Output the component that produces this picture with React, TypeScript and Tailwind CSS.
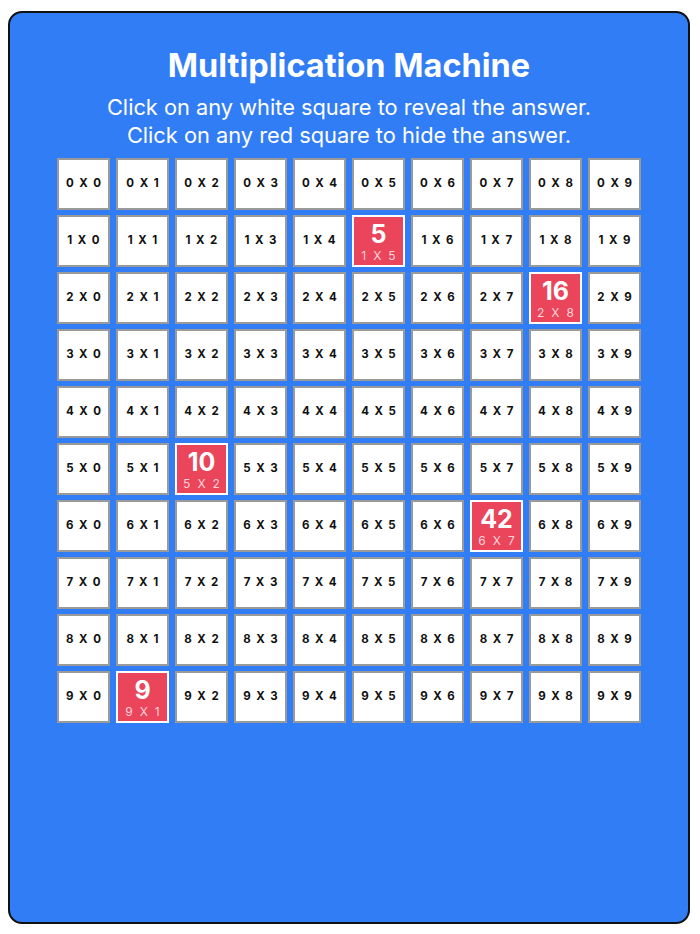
import { useState } from 'react';

const digits = [0, 1, 2, 3, 4, 5, 6, 7, 8, 9];

const initialRevealed = ['1-5', '2-8', '5-2', '6-7', '9-1'];

export default function App() {
  const [revealed, setRevealed] = useState<string[]>(initialRevealed);

  const toggle = (key: string) =>
    setRevealed((prev) =>
      prev.includes(key) ? prev.filter((k) => k !== key) : [...prev, key],
    );

  return (
    <div className="w-[700px] h-[934px] bg-white pt-[11px] pl-[8px] font-['Inter','Liberation_Sans',sans-serif]">
      <div className="w-[682px] h-[913px] bg-[#317df5] border-2 border-[#111] rounded-[14px] flex flex-col items-center pt-[34px]">
        <h1 className="text-white text-[32.5px] font-bold leading-[38px]">
          Multiplication Machine
        </h1>
        <div className="mt-[8px] text-white text-[21.8px] leading-[28px] text-center">
          <p>Click on any white square to reveal the answer.</p>
          <p>Click on any red square to hide the answer.</p>
        </div>
        <div className="mt-[9px] grid grid-cols-10 gap-x-[6px] gap-y-[5px]">
          {digits.map((a) =>
            digits.map((b) => {
              const key = `${a}-${b}`;
              const isOn = revealed.includes(key);
              return isOn
                ? <button
                  key={key}
                  onClick={() => toggle(key)}
                  className="w-[53px] h-[52px] bg-[#ea455b] border-2 border-white flex flex-col items-center justify-center text-white"
                >
                  <span className="text-[25px] font-bold leading-[25px] mt-[1px]">{a * b}</span>
                  <span className="text-[12px] leading-[12px] tracking-[1.8px] pl-[1.8px] text-[#ffd3da] mt-[3px]">
                    {a} X {b}
                  </span>
                </button>
                : <button
                  key={key}
                  onClick={() => toggle(key)}
                  className="w-[53px] h-[52px] bg-white border-2 border-[#9a9a9a] flex items-center justify-center text-[11.5px] font-bold tracking-[1.4px] pl-[1.4px] text-[#111]"
                >
                  {a} X {b}
                </button>;
            }),
          )}
        </div>
      </div>
    </div>
  );
}
